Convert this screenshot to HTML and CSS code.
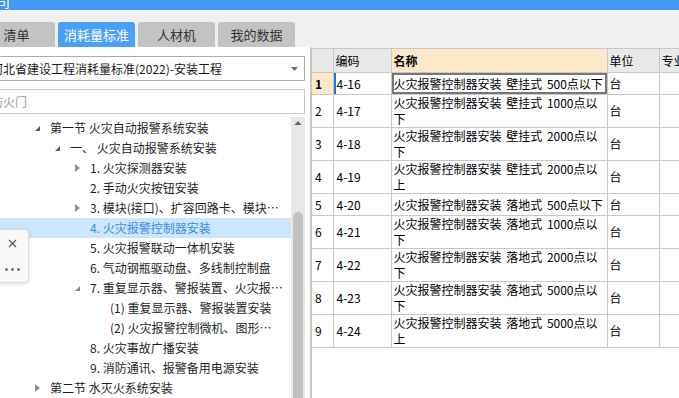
FILE: index.html
```html
<!DOCTYPE html>
<html lang="zh-CN">
<head>
<meta charset="utf-8">
<title>消耗量标准</title>
<link rel="stylesheet" href="styles.css">
</head>
<body>
<div class="topbar"><span class="topbar-glyph">司</span></div>
<div class="tabs">
  <div class="tab">清单</div>
  <div class="tab active">消耗量标准</div>
  <div class="tab">人材机</div>
  <div class="tab">我的数据</div>
</div>
<div class="content">
  <div class="left">
    <div class="select">
      <span class="field-text">河北省建设工程消耗量标准(2022)-安装工程</span>
      <svg class="caret" width="7" height="4" viewBox="0 0 7 4"><path d="M0 0H7L3.5 4Z" fill="#707070"/></svg>
    </div>
    <div class="search"><span class="field-text placeholder">防火门</span></div>
    <div class="tree-wrap">
      <ul class="tree">
        <li class="row lv0"><span class="exp"><svg width="5" height="5" viewBox="0 0 5 5"><path d="M5 0V5H0Z" fill="#5c5c5c"/></svg></span><span class="label">第一节 火灾自动报警系统安装</span></li>
        <li class="row lv1"><span class="exp"><svg width="5" height="5" viewBox="0 0 5 5"><path d="M5 0V5H0Z" fill="#5c5c5c"/></svg></span><span class="label">一、 火灾自动报警系统安装</span></li>
        <li class="row lv2"><span class="exp"><svg width="5" height="8" viewBox="0 0 5 8"><path d="M0 0L5 4L0 8Z" fill="#8e8e8e"/></svg></span><span class="label">1. 火灾探测器安装</span></li>
        <li class="row lv2"><span class="exp"></span><span class="label">2. 手动火灾按钮安装</span></li>
        <li class="row lv2"><span class="exp"><svg width="5" height="8" viewBox="0 0 5 8"><path d="M0 0L5 4L0 8Z" fill="#8e8e8e"/></svg></span><span class="label">3. 模块(接口)、扩容回路卡、模块箱安装</span></li>
        <li class="row lv2 selected"><span class="exp"></span><span class="label">4. 火灾报警控制器安装</span></li>
        <li class="row lv2"><span class="exp"></span><span class="label">5. 火灾报警联动一体机安装</span></li>
        <li class="row lv2"><span class="exp"></span><span class="label">6. 气动钢瓶驱动盘、多线制控制盘</span></li>
        <li class="row lv2"><span class="exp"><svg width="5" height="5" viewBox="0 0 5 5"><path d="M5 0V5H0Z" fill="#8a8a8a"/></svg></span><span class="label">7. 重复显示器、警报装置、火灾报警控制微机安装</span></li>
        <li class="row lv3"><span class="exp"></span><span class="label">(1) 重复显示器、警报装置安装</span></li>
        <li class="row lv3"><span class="exp"></span><span class="label">(2) 火灾报警控制微机、图形显示及打印终端安装</span></li>
        <li class="row lv2"><span class="exp"></span><span class="label">8. 火灾事故广播安装</span></li>
        <li class="row lv2"><span class="exp"></span><span class="label">9. 消防通讯、报警备用电源安装</span></li>
        <li class="row lv0"><span class="exp"><svg width="5" height="8" viewBox="0 0 5 8"><path d="M0 0L5 4L0 8Z" fill="#8e8e8e"/></svg></span><span class="label">第二节 水灭火系统安装</span></li>
      </ul>
      <div class="scrollbar">
        <svg class="up" width="14" height="5" viewBox="0 0 14 5"><path d="M3.5 5L7 1L10.5 5Z" fill="#606060"/></svg>
        <div class="thumb"></div>
      </div>
    </div>
    <div class="popup">
      <div class="pop-item"><svg width="9" height="9" viewBox="0 0 9 9"><path d="M1 1L8 8M8 1L1 8" stroke="#555" stroke-width="1.2"/></svg></div>
      <div class="pop-item"><svg width="15" height="3" viewBox="0 0 15 3"><circle cx="1.5" cy="1.5" r="1.3" fill="#555"/><circle cx="7.5" cy="1.5" r="1.3" fill="#555"/><circle cx="13.5" cy="1.5" r="1.3" fill="#555"/></svg></div>
    </div>
  </div>
  <div class="right">
    <table class="grid">
      <colgroup>
        <col class="c-num"><col class="c-code"><col class="c-name"><col class="c-unit"><col class="c-major">
      </colgroup>
      <thead>
        <tr><th></th><th>编码</th><th class="h-name">名称</th><th>单位</th><th>专业</th></tr>
      </thead>
      <tbody>
        <tr><td class="num sel-num">1</td><td class="code sel-code">4-16</td><td class="name sel-cell">火灾报警控制器安装 壁挂式 500点以下</td><td class="unit">台</td><td></td></tr>
        <tr><td class="num">2</td><td class="code">4-17</td><td class="name">火灾报警控制器安装 壁挂式 1000点以下</td><td class="unit">台</td><td></td></tr>
        <tr><td class="num">3</td><td class="code">4-18</td><td class="name">火灾报警控制器安装 壁挂式 2000点以下</td><td class="unit">台</td><td></td></tr>
        <tr><td class="num">4</td><td class="code">4-19</td><td class="name">火灾报警控制器安装 壁挂式 2000点以上</td><td class="unit">台</td><td></td></tr>
        <tr><td class="num">5</td><td class="code">4-20</td><td class="name">火灾报警控制器安装 落地式 500点以下</td><td class="unit">台</td><td></td></tr>
        <tr><td class="num">6</td><td class="code">4-21</td><td class="name">火灾报警控制器安装 落地式 1000点以下</td><td class="unit">台</td><td></td></tr>
        <tr><td class="num">7</td><td class="code">4-22</td><td class="name">火灾报警控制器安装 落地式 2000点以下</td><td class="unit">台</td><td></td></tr>
        <tr><td class="num">8</td><td class="code">4-23</td><td class="name">火灾报警控制器安装 落地式 5000点以下</td><td class="unit">台</td><td></td></tr>
        <tr><td class="num">9</td><td class="code">4-24</td><td class="name">火灾报警控制器安装 落地式 5000点以上</td><td class="unit">台</td><td></td></tr>
      </tbody>
    </table>
  </div>
</div>
</body>
</html>
```
FILE: styles.css
```css
html, body {
  margin: 0;
  padding: 0;
}
body {
  width: 679px;
  height: 398px;
  overflow: hidden;
  background: #f0f0f0;
  font-family: "Noto Sans CJK SC", "Microsoft YaHei", sans-serif;
  font-size: 12px;
  color: #1a1a1a;
}

.topbar {
  height: 10px;
  background: #4298f5;
  overflow: hidden;
}
.topbar-glyph {
  display: block;
  color: #fff;
  font-size: 14px;
  line-height: 14px;
  margin: -6px 0 0 -4px;
}

.tabs {
  height: 37px;
  display: flex;
  align-items: flex-end;
  gap: 3px;
  margin-left: -22px;
}
.tab {
  width: 77px;
  height: 25px;
  line-height: 25px;
  text-align: center;
  background: #c3c3c3;
  border-radius: 3px 3px 0 0;
  font-size: 13px;
  color: #333;
}
.tab.active {
  background: #4a9ff8;
  color: #fff;
}

.content {
  display: flex;
  height: 351px;
}

.left {
  width: 310px;
  flex-shrink: 0;
  background: #fff;
  position: relative;
  display: flex;
  flex-direction: column;
  padding-top: 9px;
  box-sizing: border-box;
  overflow: hidden;
}
.select,
.search {
  margin-left: -12px;
  width: 317px;
  height: 25px;
  flex-shrink: 0;
  box-sizing: border-box;
  display: flex;
  align-items: center;
  justify-content: space-between;
  padding: 0 6px 0 2px;
  background: #fff;
}
.select {
  border: 1px solid #acacac;
}
.search {
  margin-top: 8px;
  border: 1px solid #c9c9c9;
}
.field-text {
  line-height: 16px;
  white-space: nowrap;
}
.placeholder {
  color: #9b9b9b;
}
.caret {
  display: block;
}

.tree-wrap {
  margin-top: 3px;
  flex: 1;
  min-height: 0;
  display: flex;
}
.tree {
  width: 291px;
  flex-shrink: 0;
  list-style: none;
  margin: 0;
  padding: 1px 0 0;
}
.row {
  height: 20px;
  display: flex;
  align-items: center;
  padding-right: 8px;
  white-space: nowrap;
  color: #1f1f1f;
}
.row.lv0 { padding-left: 33px; }
.row.lv1 { padding-left: 53px; }
.row.lv2 { padding-left: 73px; }
.row.lv3 { padding-left: 93px; }
.row.selected {
  background: #cce6fb;
  color: #3b8be6;
}
.exp {
  width: 17px;
  flex-shrink: 0;
  display: flex;
  align-items: center;
  padding-left: 2px;
  box-sizing: border-box;
}
.exp svg {
  display: block;
}
.label {
  min-width: 0;
  overflow: hidden;
  text-overflow: ellipsis;
  line-height: 20px;
}

.scrollbar {
  width: 14px;
  flex-shrink: 0;
  background: #e8e8e8;
  padding-top: 3px;
  box-sizing: border-box;
}
.up {
  display: block;
}
.thumb {
  width: 10px;
  height: 220px;
  margin: 87px auto 0;
  border-radius: 5px;
  background: #c2c2c2;
}

.popup {
  position: absolute;
  left: -4px;
  top: 182px;
  width: 33px;
  height: 54px;
  box-sizing: border-box;
  background: #f8f8f8;
  border: 1px solid #dcdcdc;
  border-radius: 4px;
  box-shadow: 0 1px 4px rgba(0, 0, 0, 0.12);
  display: flex;
  flex-direction: column;
}
.pop-item {
  height: 26px;
  display: flex;
  align-items: center;
  justify-content: center;
}
.pop-item svg {
  display: block;
}

.right {
  flex: 1;
  min-width: 0;
  border-left: 2px solid #c6c6c6;
  border-top: 1px solid #f0f0f0;
  background: #fff;
  overflow: hidden;
}
.grid {
  border-collapse: collapse;
  table-layout: fixed;
  width: 430px;
  font-size: 12px;
  color: #000;
}
.c-num { width: 21px; }
.c-code { width: 58px; }
.c-name { width: 216px; }
.c-unit { width: 52px; }
.c-major { width: 83px; }
.grid th,
.grid td {
  border: 1px solid #c8c8c8;
  padding: 0 0 0 2px;
  text-align: left;
  vertical-align: middle;
  line-height: 16px;
  font-weight: normal;
  overflow: hidden;
}
.grid tr > :first-child {
  border-left: none;
}
.grid th {
  height: 23px;
  background: #e9e9e9;
  white-space: nowrap;
}
.grid th.h-name {
  background: #fde9c9;
  font-weight: bold;
}
.grid td {
  height: 21px;
}
.grid td.num,
.grid td.code {
  padding-left: 3px;
}
.grid td.name {
  padding-right: 1px;
  word-spacing: 2px;
}
.grid td.sel-num {
  background: #fde9c9;
  font-weight: bold;
}
.grid td.sel-code {
  box-shadow: inset 2px 0 0 #1e74e8;
}
.grid td.sel-cell {
  box-shadow: inset 0 0 0 2px #767676;
}
```
